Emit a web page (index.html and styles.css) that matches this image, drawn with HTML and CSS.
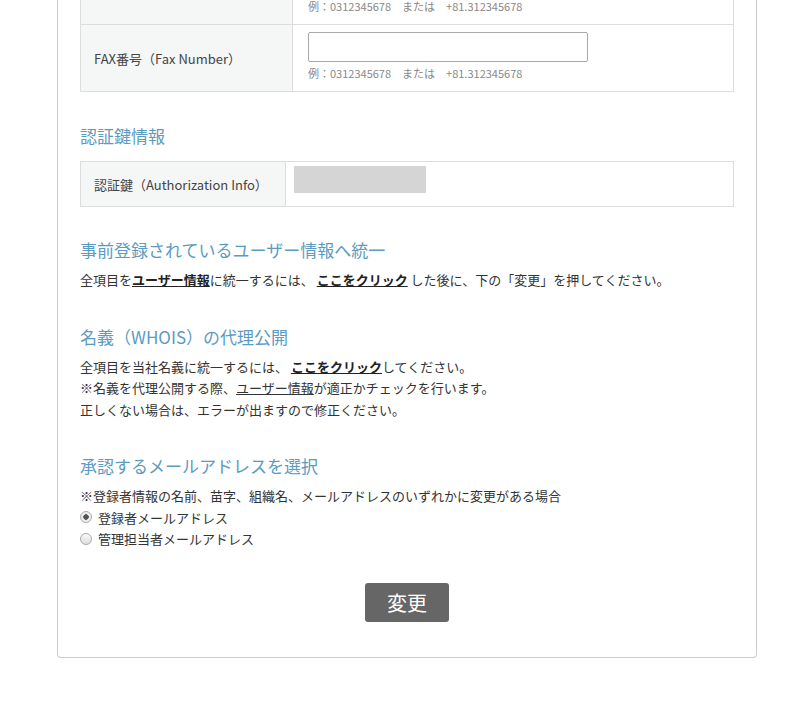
FILE: index.html
```html
<!DOCTYPE html>
<html lang="ja">
<head>
<meta charset="utf-8">
<title>登録者情報の変更</title>
<link rel="stylesheet" href="styles.css">
</head>
<body>
<div class="card">
    <table class="form-table">
        <tr>
            <th>電話番号（Phone Number）</th>
            <td>
                <input type="text" class="txt">
                <p class="hint">例：0312345678　または　+81.312345678</p>
            </td>
        </tr>
        <tr>
            <th>FAX番号（Fax Number）</th>
            <td>
                <input type="text" class="txt">
                <p class="hint">例：0312345678　または　+81.312345678</p>
            </td>
        </tr>
    </table>

    <h2 class="sec-title first">認証鍵情報</h2>
    <table class="form-table auth">
        <tr>
            <th>認証鍵（Authorization Info）</th>
            <td><div class="masked"></div></td>
        </tr>
    </table>

    <h2 class="sec-title sync">事前登録されているユーザー情報へ統一</h2>
    <p class="txt-block">全項目を<a href="javascript:;" class="strong">ユーザー情報</a>に統一するには、 <a href="javascript:;" class="strong">ここをクリック</a> した後に、下の「変更」を押してください。</p>

    <h2 class="sec-title">名義（WHOIS）の代理公開</h2>
    <p class="txt-block">全項目を当社名義に統一するには、 <a href="javascript:;" class="strong">ここをクリック</a>してください。<br>
    ※名義を代理公開する際、<a href="javascript:;">ユーザー情報</a>が適正かチェックを行います。<br>
    正しくない場合は、エラーが出ますので修正ください。</p>

    <h2 class="sec-title">承認するメールアドレスを選択</h2>
    <div class="txt-block">
        <p>※登録者情報の名前、苗字、組織名、メールアドレスのいずれかに変更がある場合</p>
        <label class="radio"><input type="radio" name="mail" checked>登録者メールアドレス</label>
        <label class="radio"><input type="radio" name="mail">管理担当者メールアドレス</label>
    </div>

    <div class="btn-area">
        <a href="javascript:;" class="btn">変更</a>
    </div>
</div>
</body>
</html>
```

FILE: styles.css
```css
*{margin:0;padding:0;box-sizing:border-box}
body{background:#fff;font-family:"Noto Sans CJK JP","Noto Sans",sans-serif;font-size:13px;color:#333}
.card{width:700px;margin:-43px 0 0 57px;padding:0 22px 35px;border:1px solid #ccc;border-top:none;border-radius:0 0 4px 4px}

.form-table{width:100%;border-collapse:collapse}
.form-table th,.form-table td{border:1px solid #ddd;vertical-align:middle}
.form-table th{width:212px;background:#f5f6f6;text-align:left;font-weight:normal;color:#444;padding:0 13px;font-size:13px}
.form-table td{padding:7px 15px 10px;background:#fff}
.form-table .txt{display:block;width:280px;height:30px;border:1px solid #aaa;border-radius:2px;background:#fff}
.form-table .hint{margin-top:3px;font-size:11px;line-height:16px;color:#888}

.form-table.auth th{width:205px;height:45px}
.form-table.auth td{padding:3px 8px 13px}
.masked{width:132px;height:27px;background:#d5d5d5}

.sec-title{font-size:17px;line-height:24px;font-weight:normal;color:#5b9bc2;margin:34px 0 7px}
.sec-title.first{margin:32px 0 13px}
.sec-title.sync{margin-top:31px;margin-bottom:7px}

.txt-block{line-height:21.5px;color:#333}
.txt-block a{color:#333;text-decoration:underline}
.txt-block a.strong{font-weight:bold;color:#222}

.radio{display:flex;align-items:center}
.radio input{appearance:none;-webkit-appearance:none;width:12px;height:12px;margin-right:6px;border:1px solid #aaa;border-radius:50%;background:linear-gradient(#fafafa,#ddd)}
.radio input:checked{background:radial-gradient(circle,#555 0 2.5px,#eee 3px)}

.btn-area{text-align:center;margin-top:33px}
.btn{display:inline-block;width:84px;height:39px;line-height:39px;background:#666;color:#fff;font-size:20px;border-radius:3px;text-decoration:none}
```
